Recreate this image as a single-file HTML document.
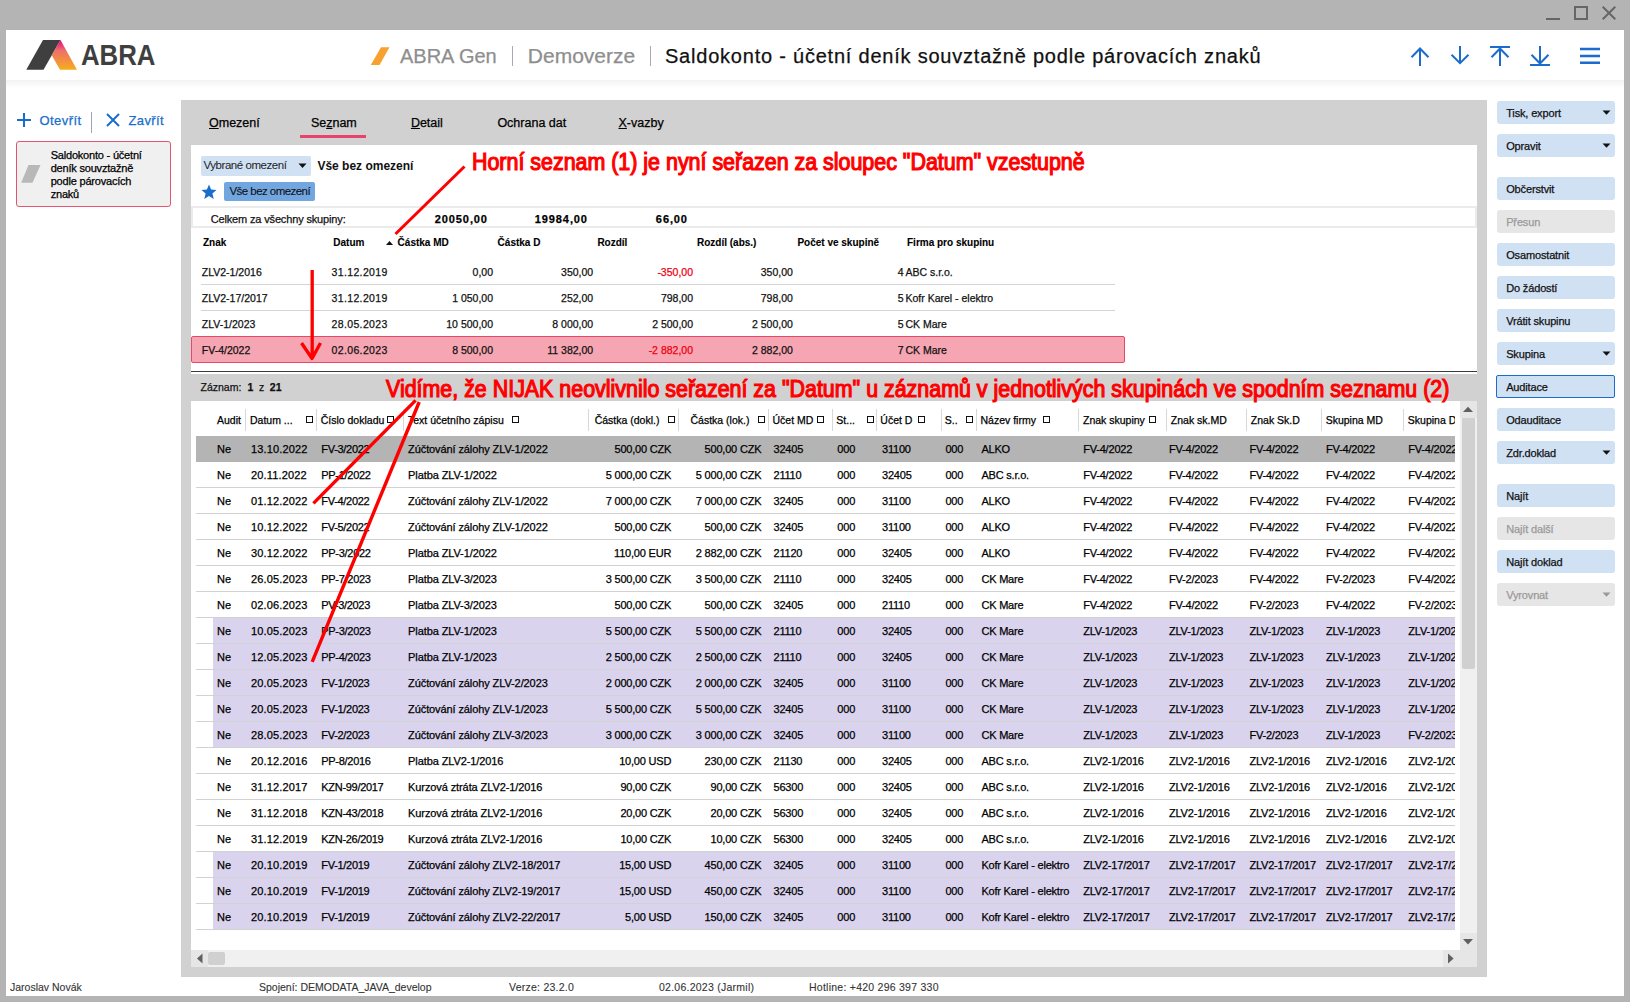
<!DOCTYPE html>
<html><head><meta charset="utf-8"><style>
html,body{margin:0;padding:0}
body{width:1630px;height:1002px;overflow:hidden;position:relative;background:#b4b4b4;font-family:"Liberation Sans", sans-serif}
.t{position:absolute;white-space:nowrap;-webkit-text-stroke:0.25px currentColor}
.r{position:absolute}
u{text-decoration:underline;text-underline-offset:1px}
</style></head><body>
<div class="r" style="left:6px;top:30px;width:1618px;height:966px;background:#fff;"></div>
<div class="r" style="left:1546px;top:18px;width:14px;height:2px;background:#666;"></div>
<div class="r" style="left:1574px;top:6px;width:10px;height:10px;border:2px solid #666"></div>
<svg class="r" style="left:1600px;top:4px" width="18" height="18"><path d="M2.7 2.7L15.3 15.3M15.3 2.7L2.7 15.3" stroke="#666" stroke-width="2"/></svg>
<div class="r" style="left:6px;top:80px;width:1618px;height:8px;background:linear-gradient(#f2f2f2,#fff)"></div>
<svg class="r" style="left:20px;top:30px" width="150" height="50">
<defs><linearGradient id="lg" x1="0" y1="0" x2="0" y2="1"><stop offset="0" stop-color="#e6007e"/><stop offset="0.35" stop-color="#ee6f6a"/><stop offset="1" stop-color="#f6ad1c"/></linearGradient></defs>
<polygon points="23,10 40.5,10 23.5,39.7 6.3,39.7" fill="#3f3f3f"/>
<polygon points="40.5,10 57,39.7 40,39.7 31.7,25.3" fill="url(#lg)"/>
</svg>
<svg class="r" style="left:80px;top:40px" width="80" height="30"><text x="1" y="25.4" font-family="Liberation Sans" font-weight="700" font-size="29" fill="#3f3f3f" textLength="74.5" lengthAdjust="spacingAndGlyphs">ABRA</text></svg>
<svg class="r" style="left:368px;top:45px" width="24" height="22"><polygon points="13,2.2 21.5,2.2 11.5,19.9 2.8,19.9" fill="#f8a12e"/></svg>
<div class="t" style="left:400.0px;top:46.17px;font-size:20px;line-height:20px;font-weight:400;color:#8e8e8e;">ABRA Gen</div>
<div class="r" style="left:512px;top:46px;width:1px;height:20px;background:#a8a8b8;"></div>
<div class="t" style="left:527.8px;top:45.32px;font-size:21px;line-height:21px;font-weight:400;color:#8e8e8e;">Demoverze</div>
<div class="r" style="left:650px;top:46px;width:1px;height:20px;background:#a8a8b8;"></div>
<div class="t" style="left:665.0px;top:45.97px;font-size:20px;line-height:20px;font-weight:400;color:#111;letter-spacing:0.78px">Saldokonto - účetní deník souvztažně podle párovacích znaků</div>
<svg class="r" style="left:1405px;top:40px" width="205" height="32" fill="none" stroke="#1a6dcc" stroke-width="2">
<path d="M15 8V26M6.5 17.3L15 8.5L23.5 17.3"/>
<path d="M55 6V23.6M46.5 14.8L55 23.2L63.5 14.8"/>
<path d="M85 7H105M95 7.5V26M86.5 17.3L95 8.5L103.5 17.3"/>
<path d="M125 25H145M135 6V24M126.5 14.8L135 23.5L143.5 14.8"/>
<path d="M175 9H195M175 16H195M175 22.7H195" stroke-width="2.4"/>
</svg>
<svg class="r" style="left:16px;top:112px" width="16" height="16"><path d="M8 1V15M1 8H15" stroke="#1a6dcc" stroke-width="2"/></svg>
<div class="t" style="left:39.6px;top:113.70px;font-size:13px;line-height:13px;font-weight:400;color:#1a6dcc;letter-spacing:0.4px">Otevřít</div>
<div class="r" style="left:91px;top:112px;width:1px;height:21px;background:#a0a0b8;"></div>
<svg class="r" style="left:106px;top:113px" width="14" height="14"><path d="M1 1L13 13M13 1L1 13" stroke="#1a6dcc" stroke-width="2"/></svg>
<div class="t" style="left:128.5px;top:113.70px;font-size:13px;line-height:13px;font-weight:400;color:#1a6dcc;letter-spacing:0.4px">Zavřít</div>
<div class="r" style="left:16px;top:141px;width:153px;height:64px;border:1px solid #e4566f;border-radius:3px;background:#f0f0f0"></div>
<svg class="r" style="left:20px;top:163px" width="22" height="22"><polygon points="8.5,2 20.5,2 12.5,19.7 1.2,19.7" fill="#b8b8b8"/></svg>
<div class="t" style="left:50.7px;top:149.69px;font-size:11px;line-height:11px;font-weight:400;color:#000;letter-spacing:-0.2px">Saldokonto - účetní</div>
<div class="t" style="left:50.7px;top:162.69px;font-size:11px;line-height:11px;font-weight:400;color:#000;letter-spacing:-0.2px">deník souvztažně</div>
<div class="t" style="left:50.7px;top:175.69px;font-size:11px;line-height:11px;font-weight:400;color:#000;letter-spacing:-0.2px">podle párovacích</div>
<div class="t" style="left:50.7px;top:188.69px;font-size:11px;line-height:11px;font-weight:400;color:#000;letter-spacing:-0.2px">znaků</div>
<div class="r" style="left:181px;top:100px;width:1306px;height:877px;background:#d1d1d1;"></div>
<div class="t" style="left:209px;top:117.42px;font-size:12.5px;line-height:12.5px;color:#000"><u>O</u>mezení</div>
<div class="t" style="left:310.9px;top:117.42px;font-size:12.5px;line-height:12.5px;color:#000">Se<u>z</u>nam</div>
<div class="t" style="left:410.9px;top:117.42px;font-size:12.5px;line-height:12.5px;color:#000"><u>D</u>etail</div>
<div class="t" style="left:497.4px;top:117.42px;font-size:12.5px;line-height:12.5px;color:#000">Ochrana dat</div>
<div class="t" style="left:618.5px;top:117.42px;font-size:12.5px;line-height:12.5px;color:#000"><u>X</u>-vazby</div>
<div class="r" style="left:300px;top:135px;width:66px;height:3px;background:#e8436a;"></div>
<div class="r" style="left:191px;top:145px;width:1286px;height:229px;background:#fff;"></div>
<div class="r" style="left:201px;top:156px;width:110px;height:20px;background:#d1e1f4;border-radius:2px"></div>
<div class="t" style="left:203.5px;top:159.97px;font-size:11.5px;line-height:11.5px;font-weight:400;color:#222;letter-spacing:-0.45px;-webkit-text-stroke:0">Vybrané omezení</div>
<svg class="r" style="left:298px;top:163px" width="10" height="6"><polygon points="0.5,0.5 8.5,0.5 4.5,5" fill="#111"/></svg>
<div class="t" style="left:317.4px;top:159.54px;font-size:12px;line-height:12px;font-weight:700;color:#111;letter-spacing:0px;-webkit-text-stroke:0">Vše bez omezení</div>
<svg class="r" style="left:201px;top:184px" width="16" height="16"><polygon points="8,0.5 10.1,5.6 15.5,6 11.4,9.5 12.7,15 8,12 3.3,15 4.6,9.5 0.5,6 5.9,5.6" fill="#1a6dcc"/></svg>
<div class="r" style="left:224px;top:182px;width:91px;height:19px;background:#72a6e0;border-radius:2px"></div>
<div class="t" style="left:229.5px;top:185.77px;font-size:11.5px;line-height:11.5px;font-weight:400;color:#111;letter-spacing:-0.55px;-webkit-text-stroke:0.1px #111">Vše bez omezení</div>
<div class="r" style="left:191px;top:206px;width:1282px;height:18px;border:2px solid #ebebeb;border-left-width:2px;background:#fff"></div>
<div class="t" style="left:210.7px;top:213.59px;font-size:11px;line-height:11px;font-weight:400;color:#111;letter-spacing:-0.15px">Celkem za všechny skupiny:</div>
<div class="t" style="left:87.9px;width:400px;text-align:right;top:213.59px;font-size:11px;line-height:11px;font-weight:700;color:#000;letter-spacing:0.9px">20050,00</div>
<div class="t" style="left:187.9px;width:400px;text-align:right;top:213.59px;font-size:11px;line-height:11px;font-weight:700;color:#000;letter-spacing:0.9px">19984,00</div>
<div class="t" style="left:287.9px;width:400px;text-align:right;top:213.59px;font-size:11px;line-height:11px;font-weight:700;color:#000;letter-spacing:0.9px">66,00</div>
<div class="t" style="left:203.0px;top:238.34px;font-size:10px;line-height:10px;font-weight:700;color:#000;-webkit-text-stroke:0.1px #000">Znak</div>
<div class="t" style="left:333.3px;top:238.34px;font-size:10px;line-height:10px;font-weight:700;color:#000;-webkit-text-stroke:0.1px #000">Datum</div>
<div class="t" style="left:397.6px;top:238.34px;font-size:10px;line-height:10px;font-weight:700;color:#000;-webkit-text-stroke:0.1px #000">Částka MD</div>
<div class="t" style="left:497.6px;top:238.34px;font-size:10px;line-height:10px;font-weight:700;color:#000;-webkit-text-stroke:0.1px #000">Částka D</div>
<div class="t" style="left:597.4px;top:238.34px;font-size:10px;line-height:10px;font-weight:700;color:#000;-webkit-text-stroke:0.1px #000">Rozdíl</div>
<div class="t" style="left:697.0px;top:238.34px;font-size:10px;line-height:10px;font-weight:700;color:#000;-webkit-text-stroke:0.1px #000">Rozdíl (abs.)</div>
<div class="t" style="left:797.4px;top:238.34px;font-size:10px;line-height:10px;font-weight:700;color:#000;-webkit-text-stroke:0.1px #000">Počet ve skupině</div>
<div class="t" style="left:907.0px;top:238.34px;font-size:10px;line-height:10px;font-weight:700;color:#000;-webkit-text-stroke:0.1px #000">Firma pro skupinu</div>
<svg class="r" style="left:385px;top:239.5px" width="9" height="6"><polygon points="1,5 4.5,1 8,5" fill="#111"/></svg>
<div class="r" style="left:201px;top:284px;width:914px;height:1px;background:#d4d4d4;"></div>
<div class="t" style="left:201.8px;top:266.61px;font-size:10.5px;line-height:10.5px;font-weight:400;color:#111;">ZLV2-1/2016</div>
<div class="t" style="left:331.6px;top:266.61px;font-size:10.5px;line-height:10.5px;font-weight:400;color:#111;letter-spacing:0.35px">31.12.2019</div>
<div class="t" style="left:93.0px;width:400px;text-align:right;top:266.61px;font-size:10.5px;line-height:10.5px;font-weight:400;color:#111;">0,00</div>
<div class="t" style="left:193.2px;width:400px;text-align:right;top:266.61px;font-size:10.5px;line-height:10.5px;font-weight:400;color:#111;">350,00</div>
<div class="t" style="left:293.0px;width:400px;text-align:right;top:266.61px;font-size:10.5px;line-height:10.5px;font-weight:400;color:#f00010;">-350,00</div>
<div class="t" style="left:392.9px;width:400px;text-align:right;top:266.61px;font-size:10.5px;line-height:10.5px;font-weight:400;color:#111;">350,00</div>
<div class="t" style="left:503.5px;width:400px;text-align:right;top:266.61px;font-size:10.5px;line-height:10.5px;font-weight:400;color:#111;">4</div>
<div class="t" style="left:905.5px;top:266.61px;font-size:10.5px;line-height:10.5px;font-weight:400;color:#111;">ABC s.r.o.</div>
<div class="r" style="left:201px;top:310px;width:914px;height:1px;background:#d4d4d4;"></div>
<div class="t" style="left:201.8px;top:292.61px;font-size:10.5px;line-height:10.5px;font-weight:400;color:#111;">ZLV2-17/2017</div>
<div class="t" style="left:331.6px;top:292.61px;font-size:10.5px;line-height:10.5px;font-weight:400;color:#111;letter-spacing:0.35px">31.12.2019</div>
<div class="t" style="left:93.0px;width:400px;text-align:right;top:292.61px;font-size:10.5px;line-height:10.5px;font-weight:400;color:#111;">1 050,00</div>
<div class="t" style="left:193.2px;width:400px;text-align:right;top:292.61px;font-size:10.5px;line-height:10.5px;font-weight:400;color:#111;">252,00</div>
<div class="t" style="left:293.0px;width:400px;text-align:right;top:292.61px;font-size:10.5px;line-height:10.5px;font-weight:400;color:#111;">798,00</div>
<div class="t" style="left:392.9px;width:400px;text-align:right;top:292.61px;font-size:10.5px;line-height:10.5px;font-weight:400;color:#111;">798,00</div>
<div class="t" style="left:503.5px;width:400px;text-align:right;top:292.61px;font-size:10.5px;line-height:10.5px;font-weight:400;color:#111;">5</div>
<div class="t" style="left:905.5px;top:292.61px;font-size:10.5px;line-height:10.5px;font-weight:400;color:#111;">Kofr Karel - elektro</div>
<div class="t" style="left:201.8px;top:318.61px;font-size:10.5px;line-height:10.5px;font-weight:400;color:#111;">ZLV-1/2023</div>
<div class="t" style="left:331.6px;top:318.61px;font-size:10.5px;line-height:10.5px;font-weight:400;color:#111;letter-spacing:0.35px">28.05.2023</div>
<div class="t" style="left:93.0px;width:400px;text-align:right;top:318.61px;font-size:10.5px;line-height:10.5px;font-weight:400;color:#111;">10 500,00</div>
<div class="t" style="left:193.2px;width:400px;text-align:right;top:318.61px;font-size:10.5px;line-height:10.5px;font-weight:400;color:#111;">8 000,00</div>
<div class="t" style="left:293.0px;width:400px;text-align:right;top:318.61px;font-size:10.5px;line-height:10.5px;font-weight:400;color:#111;">2 500,00</div>
<div class="t" style="left:392.9px;width:400px;text-align:right;top:318.61px;font-size:10.5px;line-height:10.5px;font-weight:400;color:#111;">2 500,00</div>
<div class="t" style="left:503.5px;width:400px;text-align:right;top:318.61px;font-size:10.5px;line-height:10.5px;font-weight:400;color:#111;">5</div>
<div class="t" style="left:905.5px;top:318.61px;font-size:10.5px;line-height:10.5px;font-weight:400;color:#111;">CK Mare</div>
<div class="r" style="left:191px;top:336px;width:932px;height:25px;border:1px solid #e84868;border-radius:2px;background:#f6a5b2"></div>
<div class="t" style="left:201.8px;top:344.61px;font-size:10.5px;line-height:10.5px;font-weight:400;color:#111;">FV-4/2022</div>
<div class="t" style="left:331.6px;top:344.61px;font-size:10.5px;line-height:10.5px;font-weight:400;color:#111;letter-spacing:0.35px">02.06.2023</div>
<div class="t" style="left:93.0px;width:400px;text-align:right;top:344.61px;font-size:10.5px;line-height:10.5px;font-weight:400;color:#111;">8 500,00</div>
<div class="t" style="left:193.2px;width:400px;text-align:right;top:344.61px;font-size:10.5px;line-height:10.5px;font-weight:400;color:#111;">11 382,00</div>
<div class="t" style="left:293.0px;width:400px;text-align:right;top:344.61px;font-size:10.5px;line-height:10.5px;font-weight:400;color:#f00010;">-2 882,00</div>
<div class="t" style="left:392.9px;width:400px;text-align:right;top:344.61px;font-size:10.5px;line-height:10.5px;font-weight:400;color:#111;">2 882,00</div>
<div class="t" style="left:503.5px;width:400px;text-align:right;top:344.61px;font-size:10.5px;line-height:10.5px;font-weight:400;color:#111;">7</div>
<div class="t" style="left:905.5px;top:344.61px;font-size:10.5px;line-height:10.5px;font-weight:400;color:#111;">CK Mare</div>
<div class="r" style="left:191px;top:371px;width:1286px;height:1px;background:#3a3a3a;"></div>
<div class="t" style="left:200.5px;top:382.31px;font-size:10.5px;line-height:10.5px;font-weight:400;color:#111;">Záznam:</div>
<div class="t" style="left:247.5px;top:382.31px;font-size:10.5px;line-height:10.5px;font-weight:700;color:#111;">1</div>
<div class="t" style="left:259.0px;top:382.31px;font-size:10.5px;line-height:10.5px;font-weight:400;color:#111;">z</div>
<div class="t" style="left:269.8px;top:382.31px;font-size:10.5px;line-height:10.5px;font-weight:700;color:#111;">21</div>
<div class="r" style="left:191px;top:401px;width:1286px;height:566px;background:#fff;"></div>
<div class="r" style="left:245px;top:409px;width:1px;height:22px;background:#d8d8d8;"></div>
<div class="r" style="left:191px;top:401px;width:1264px;height:35px;overflow:hidden">
<div class="t" style="left:26.0px;top:14.11px;font-size:10.5px;line-height:10.5px;font-weight:400;color:#000;letter-spacing:0px">Audit</div>
<div class="t" style="left:59.0px;top:14.11px;font-size:10.5px;line-height:10.5px;font-weight:400;color:#000;letter-spacing:0px">Datum ...</div>
<div class="r" style="left:115px;top:15px;width:5px;height:5px;border:1px solid #111"></div>
<div class="r" style="left:125px;top:8px;width:1px;height:22px;background:#d8d8d8"></div>
<div class="t" style="left:129.7px;top:14.11px;font-size:10.5px;line-height:10.5px;font-weight:400;color:#000;letter-spacing:0px">Číslo dokladu</div>
<div class="r" style="left:196px;top:15px;width:5px;height:5px;border:1px solid #111"></div>
<div class="r" style="left:212px;top:8px;width:1px;height:22px;background:#d8d8d8"></div>
<div class="t" style="left:217.0px;top:14.11px;font-size:10.5px;line-height:10.5px;font-weight:400;color:#000;letter-spacing:0px">Text účetního zápisu</div>
<div class="r" style="left:321px;top:15px;width:5px;height:5px;border:1px solid #111"></div>
<div class="r" style="left:397px;top:8px;width:1px;height:22px;background:#d8d8d8"></div>
<div class="t" style="left:403.7px;top:14.11px;font-size:10.5px;line-height:10.5px;font-weight:400;color:#000;letter-spacing:0px">Částka (dokl.)</div>
<div class="r" style="left:477px;top:15px;width:5px;height:5px;border:1px solid #111"></div>
<div class="r" style="left:487px;top:8px;width:1px;height:22px;background:#d8d8d8"></div>
<div class="t" style="left:499.5px;top:14.11px;font-size:10.5px;line-height:10.5px;font-weight:400;color:#000;letter-spacing:0px">Částka (lok.)</div>
<div class="r" style="left:567px;top:15px;width:5px;height:5px;border:1px solid #111"></div>
<div class="r" style="left:577px;top:8px;width:1px;height:22px;background:#d8d8d8"></div>
<div class="t" style="left:581.5px;top:14.11px;font-size:10.5px;line-height:10.5px;font-weight:400;color:#000;letter-spacing:0px">Účet MD</div>
<div class="r" style="left:626px;top:15px;width:5px;height:5px;border:1px solid #111"></div>
<div class="r" style="left:641px;top:8px;width:1px;height:22px;background:#d8d8d8"></div>
<div class="t" style="left:645.3px;top:14.11px;font-size:10.5px;line-height:10.5px;font-weight:400;color:#000;letter-spacing:0px">St...</div>
<div class="r" style="left:676px;top:15px;width:5px;height:5px;border:1px solid #111"></div>
<div class="r" style="left:685px;top:8px;width:1px;height:22px;background:#d8d8d8"></div>
<div class="t" style="left:689.3px;top:14.11px;font-size:10.5px;line-height:10.5px;font-weight:400;color:#000;letter-spacing:0px">Účet D</div>
<div class="r" style="left:727px;top:15px;width:5px;height:5px;border:1px solid #111"></div>
<div class="r" style="left:750px;top:8px;width:1px;height:22px;background:#d8d8d8"></div>
<div class="t" style="left:753.8px;top:14.11px;font-size:10.5px;line-height:10.5px;font-weight:400;color:#000;letter-spacing:0px">S..</div>
<div class="r" style="left:775px;top:15px;width:5px;height:5px;border:1px solid #111"></div>
<div class="r" style="left:785px;top:8px;width:1px;height:22px;background:#d8d8d8"></div>
<div class="t" style="left:789.5px;top:14.11px;font-size:10.5px;line-height:10.5px;font-weight:400;color:#000;letter-spacing:0px">Název firmy</div>
<div class="r" style="left:852px;top:15px;width:5px;height:5px;border:1px solid #111"></div>
<div class="r" style="left:887px;top:8px;width:1px;height:22px;background:#d8d8d8"></div>
<div class="t" style="left:892.0px;top:14.11px;font-size:10.5px;line-height:10.5px;font-weight:400;color:#000;letter-spacing:0px">Znak skupiny</div>
<div class="r" style="left:958px;top:15px;width:5px;height:5px;border:1px solid #111"></div>
<div class="r" style="left:975px;top:8px;width:1px;height:22px;background:#d8d8d8"></div>
<div class="t" style="left:979.8px;top:14.11px;font-size:10.5px;line-height:10.5px;font-weight:400;color:#000;letter-spacing:0px">Znak sk.MD</div>
<div class="r" style="left:1055px;top:8px;width:1px;height:22px;background:#d8d8d8"></div>
<div class="t" style="left:1059.8px;top:14.11px;font-size:10.5px;line-height:10.5px;font-weight:400;color:#000;letter-spacing:0px">Znak Sk.D</div>
<div class="r" style="left:1130px;top:8px;width:1px;height:22px;background:#d8d8d8"></div>
<div class="t" style="left:1134.7px;top:14.11px;font-size:10.5px;line-height:10.5px;font-weight:400;color:#000;letter-spacing:0px">Skupina MD</div>
<div class="r" style="left:1212px;top:8px;width:1px;height:22px;background:#d8d8d8"></div>
<div class="t" style="left:1216.8px;top:14.11px;font-size:10.5px;line-height:10.5px;font-weight:400;color:#000;letter-spacing:0px">Skupina D</div>
</div>
<div class="r" style="left:191px;top:436px;width:1264px;height:494px;overflow:hidden">
<div class="r" style="left:5px;top:0px;width:1264px;height:26px;background:#b4b4b4;"></div>
<div class="t" style="left:26.0px;top:7.69px;font-size:11px;line-height:11px;font-weight:400;color:#000;">Ne</div>
<div class="t" style="left:60.0px;top:7.69px;font-size:11px;line-height:11px;font-weight:400;color:#000;letter-spacing:0.15px">13.10.2022</div>
<div class="t" style="left:130.3px;top:7.69px;font-size:11px;line-height:11px;font-weight:400;color:#000;letter-spacing:-0.3px">FV-3/2022</div>
<div class="t" style="left:217.1px;top:7.69px;font-size:11px;line-height:11px;font-weight:400;color:#000;letter-spacing:-0.1px">Zúčtování zálohy ZLV-1/2022</div>
<div class="t" style="left:80.2px;width:400px;text-align:right;top:7.69px;font-size:11px;line-height:11px;font-weight:400;color:#000;letter-spacing:-0.2px">500,00 CZK</div>
<div class="t" style="left:170.3px;width:400px;text-align:right;top:7.69px;font-size:11px;line-height:11px;font-weight:400;color:#000;letter-spacing:-0.2px">500,00 CZK</div>
<div class="t" style="left:582.5px;top:7.69px;font-size:11px;line-height:11px;font-weight:400;color:#000;letter-spacing:-0.2px">32405</div>
<div class="t" style="left:646.3px;top:7.69px;font-size:11px;line-height:11px;font-weight:400;color:#000;letter-spacing:-0.2px">000</div>
<div class="t" style="left:691.0px;top:7.69px;font-size:11px;line-height:11px;font-weight:400;color:#000;letter-spacing:-0.2px">31100</div>
<div class="t" style="left:754.4px;top:7.69px;font-size:11px;line-height:11px;font-weight:400;color:#000;letter-spacing:-0.2px">000</div>
<div class="t" style="left:790.4px;top:7.69px;font-size:11px;line-height:11px;font-weight:400;color:#000;letter-spacing:-0.2px">ALKO</div>
<div class="t" style="left:892.2px;top:7.69px;font-size:11px;line-height:11px;font-weight:400;color:#000;letter-spacing:-0.2px">FV-4/2022</div>
<div class="t" style="left:978.0px;top:7.69px;font-size:11px;line-height:11px;font-weight:400;color:#000;letter-spacing:-0.2px">FV-4/2022</div>
<div class="t" style="left:1058.4px;top:7.69px;font-size:11px;line-height:11px;font-weight:400;color:#000;letter-spacing:-0.2px">FV-4/2022</div>
<div class="t" style="left:1135.0px;top:7.69px;font-size:11px;line-height:11px;font-weight:400;color:#000;letter-spacing:-0.2px">FV-4/2022</div>
<div class="t" style="left:1217.3px;top:7.69px;font-size:11px;line-height:11px;font-weight:400;color:#000;letter-spacing:-0.2px">FV-4/2022</div>
<div class="r" style="left:5px;top:51px;width:1264px;height:1px;background:#d2d2d2;"></div>
<div class="t" style="left:26.0px;top:33.69px;font-size:11px;line-height:11px;font-weight:400;color:#000;">Ne</div>
<div class="t" style="left:60.0px;top:33.69px;font-size:11px;line-height:11px;font-weight:400;color:#000;letter-spacing:0.15px">20.11.2022</div>
<div class="t" style="left:130.3px;top:33.69px;font-size:11px;line-height:11px;font-weight:400;color:#000;letter-spacing:-0.3px">PP-1/2022</div>
<div class="t" style="left:217.1px;top:33.69px;font-size:11px;line-height:11px;font-weight:400;color:#000;letter-spacing:-0.1px">Platba ZLV-1/2022</div>
<div class="t" style="left:80.2px;width:400px;text-align:right;top:33.69px;font-size:11px;line-height:11px;font-weight:400;color:#000;letter-spacing:-0.2px">5 000,00 CZK</div>
<div class="t" style="left:170.3px;width:400px;text-align:right;top:33.69px;font-size:11px;line-height:11px;font-weight:400;color:#000;letter-spacing:-0.2px">5 000,00 CZK</div>
<div class="t" style="left:582.5px;top:33.69px;font-size:11px;line-height:11px;font-weight:400;color:#000;letter-spacing:-0.2px">21110</div>
<div class="t" style="left:646.3px;top:33.69px;font-size:11px;line-height:11px;font-weight:400;color:#000;letter-spacing:-0.2px">000</div>
<div class="t" style="left:691.0px;top:33.69px;font-size:11px;line-height:11px;font-weight:400;color:#000;letter-spacing:-0.2px">32405</div>
<div class="t" style="left:754.4px;top:33.69px;font-size:11px;line-height:11px;font-weight:400;color:#000;letter-spacing:-0.2px">000</div>
<div class="t" style="left:790.4px;top:33.69px;font-size:11px;line-height:11px;font-weight:400;color:#000;letter-spacing:-0.2px">ABC s.r.o.</div>
<div class="t" style="left:892.2px;top:33.69px;font-size:11px;line-height:11px;font-weight:400;color:#000;letter-spacing:-0.2px">FV-4/2022</div>
<div class="t" style="left:978.0px;top:33.69px;font-size:11px;line-height:11px;font-weight:400;color:#000;letter-spacing:-0.2px">FV-4/2022</div>
<div class="t" style="left:1058.4px;top:33.69px;font-size:11px;line-height:11px;font-weight:400;color:#000;letter-spacing:-0.2px">FV-4/2022</div>
<div class="t" style="left:1135.0px;top:33.69px;font-size:11px;line-height:11px;font-weight:400;color:#000;letter-spacing:-0.2px">FV-4/2022</div>
<div class="t" style="left:1217.3px;top:33.69px;font-size:11px;line-height:11px;font-weight:400;color:#000;letter-spacing:-0.2px">FV-4/2022</div>
<div class="r" style="left:5px;top:77px;width:1264px;height:1px;background:#d2d2d2;"></div>
<div class="t" style="left:26.0px;top:59.69px;font-size:11px;line-height:11px;font-weight:400;color:#000;">Ne</div>
<div class="t" style="left:60.0px;top:59.69px;font-size:11px;line-height:11px;font-weight:400;color:#000;letter-spacing:0.15px">01.12.2022</div>
<div class="t" style="left:130.3px;top:59.69px;font-size:11px;line-height:11px;font-weight:400;color:#000;letter-spacing:-0.3px">FV-4/2022</div>
<div class="t" style="left:217.1px;top:59.69px;font-size:11px;line-height:11px;font-weight:400;color:#000;letter-spacing:-0.1px">Zúčtování zálohy ZLV-1/2022</div>
<div class="t" style="left:80.2px;width:400px;text-align:right;top:59.69px;font-size:11px;line-height:11px;font-weight:400;color:#000;letter-spacing:-0.2px">7 000,00 CZK</div>
<div class="t" style="left:170.3px;width:400px;text-align:right;top:59.69px;font-size:11px;line-height:11px;font-weight:400;color:#000;letter-spacing:-0.2px">7 000,00 CZK</div>
<div class="t" style="left:582.5px;top:59.69px;font-size:11px;line-height:11px;font-weight:400;color:#000;letter-spacing:-0.2px">32405</div>
<div class="t" style="left:646.3px;top:59.69px;font-size:11px;line-height:11px;font-weight:400;color:#000;letter-spacing:-0.2px">000</div>
<div class="t" style="left:691.0px;top:59.69px;font-size:11px;line-height:11px;font-weight:400;color:#000;letter-spacing:-0.2px">31100</div>
<div class="t" style="left:754.4px;top:59.69px;font-size:11px;line-height:11px;font-weight:400;color:#000;letter-spacing:-0.2px">000</div>
<div class="t" style="left:790.4px;top:59.69px;font-size:11px;line-height:11px;font-weight:400;color:#000;letter-spacing:-0.2px">ALKO</div>
<div class="t" style="left:892.2px;top:59.69px;font-size:11px;line-height:11px;font-weight:400;color:#000;letter-spacing:-0.2px">FV-4/2022</div>
<div class="t" style="left:978.0px;top:59.69px;font-size:11px;line-height:11px;font-weight:400;color:#000;letter-spacing:-0.2px">FV-4/2022</div>
<div class="t" style="left:1058.4px;top:59.69px;font-size:11px;line-height:11px;font-weight:400;color:#000;letter-spacing:-0.2px">FV-4/2022</div>
<div class="t" style="left:1135.0px;top:59.69px;font-size:11px;line-height:11px;font-weight:400;color:#000;letter-spacing:-0.2px">FV-4/2022</div>
<div class="t" style="left:1217.3px;top:59.69px;font-size:11px;line-height:11px;font-weight:400;color:#000;letter-spacing:-0.2px">FV-4/2022</div>
<div class="r" style="left:5px;top:103px;width:1264px;height:1px;background:#d2d2d2;"></div>
<div class="t" style="left:26.0px;top:85.69px;font-size:11px;line-height:11px;font-weight:400;color:#000;">Ne</div>
<div class="t" style="left:60.0px;top:85.69px;font-size:11px;line-height:11px;font-weight:400;color:#000;letter-spacing:0.15px">10.12.2022</div>
<div class="t" style="left:130.3px;top:85.69px;font-size:11px;line-height:11px;font-weight:400;color:#000;letter-spacing:-0.3px">FV-5/2022</div>
<div class="t" style="left:217.1px;top:85.69px;font-size:11px;line-height:11px;font-weight:400;color:#000;letter-spacing:-0.1px">Zúčtování zálohy ZLV-1/2022</div>
<div class="t" style="left:80.2px;width:400px;text-align:right;top:85.69px;font-size:11px;line-height:11px;font-weight:400;color:#000;letter-spacing:-0.2px">500,00 CZK</div>
<div class="t" style="left:170.3px;width:400px;text-align:right;top:85.69px;font-size:11px;line-height:11px;font-weight:400;color:#000;letter-spacing:-0.2px">500,00 CZK</div>
<div class="t" style="left:582.5px;top:85.69px;font-size:11px;line-height:11px;font-weight:400;color:#000;letter-spacing:-0.2px">32405</div>
<div class="t" style="left:646.3px;top:85.69px;font-size:11px;line-height:11px;font-weight:400;color:#000;letter-spacing:-0.2px">000</div>
<div class="t" style="left:691.0px;top:85.69px;font-size:11px;line-height:11px;font-weight:400;color:#000;letter-spacing:-0.2px">31100</div>
<div class="t" style="left:754.4px;top:85.69px;font-size:11px;line-height:11px;font-weight:400;color:#000;letter-spacing:-0.2px">000</div>
<div class="t" style="left:790.4px;top:85.69px;font-size:11px;line-height:11px;font-weight:400;color:#000;letter-spacing:-0.2px">ALKO</div>
<div class="t" style="left:892.2px;top:85.69px;font-size:11px;line-height:11px;font-weight:400;color:#000;letter-spacing:-0.2px">FV-4/2022</div>
<div class="t" style="left:978.0px;top:85.69px;font-size:11px;line-height:11px;font-weight:400;color:#000;letter-spacing:-0.2px">FV-4/2022</div>
<div class="t" style="left:1058.4px;top:85.69px;font-size:11px;line-height:11px;font-weight:400;color:#000;letter-spacing:-0.2px">FV-4/2022</div>
<div class="t" style="left:1135.0px;top:85.69px;font-size:11px;line-height:11px;font-weight:400;color:#000;letter-spacing:-0.2px">FV-4/2022</div>
<div class="t" style="left:1217.3px;top:85.69px;font-size:11px;line-height:11px;font-weight:400;color:#000;letter-spacing:-0.2px">FV-4/2022</div>
<div class="r" style="left:5px;top:129px;width:1264px;height:1px;background:#d2d2d2;"></div>
<div class="t" style="left:26.0px;top:111.69px;font-size:11px;line-height:11px;font-weight:400;color:#000;">Ne</div>
<div class="t" style="left:60.0px;top:111.69px;font-size:11px;line-height:11px;font-weight:400;color:#000;letter-spacing:0.15px">30.12.2022</div>
<div class="t" style="left:130.3px;top:111.69px;font-size:11px;line-height:11px;font-weight:400;color:#000;letter-spacing:-0.3px">PP-3/2022</div>
<div class="t" style="left:217.1px;top:111.69px;font-size:11px;line-height:11px;font-weight:400;color:#000;letter-spacing:-0.1px">Platba ZLV-1/2022</div>
<div class="t" style="left:80.2px;width:400px;text-align:right;top:111.69px;font-size:11px;line-height:11px;font-weight:400;color:#000;letter-spacing:-0.2px">110,00 EUR</div>
<div class="t" style="left:170.3px;width:400px;text-align:right;top:111.69px;font-size:11px;line-height:11px;font-weight:400;color:#000;letter-spacing:-0.2px">2 882,00 CZK</div>
<div class="t" style="left:582.5px;top:111.69px;font-size:11px;line-height:11px;font-weight:400;color:#000;letter-spacing:-0.2px">21120</div>
<div class="t" style="left:646.3px;top:111.69px;font-size:11px;line-height:11px;font-weight:400;color:#000;letter-spacing:-0.2px">000</div>
<div class="t" style="left:691.0px;top:111.69px;font-size:11px;line-height:11px;font-weight:400;color:#000;letter-spacing:-0.2px">32405</div>
<div class="t" style="left:754.4px;top:111.69px;font-size:11px;line-height:11px;font-weight:400;color:#000;letter-spacing:-0.2px">000</div>
<div class="t" style="left:790.4px;top:111.69px;font-size:11px;line-height:11px;font-weight:400;color:#000;letter-spacing:-0.2px">ALKO</div>
<div class="t" style="left:892.2px;top:111.69px;font-size:11px;line-height:11px;font-weight:400;color:#000;letter-spacing:-0.2px">FV-4/2022</div>
<div class="t" style="left:978.0px;top:111.69px;font-size:11px;line-height:11px;font-weight:400;color:#000;letter-spacing:-0.2px">FV-4/2022</div>
<div class="t" style="left:1058.4px;top:111.69px;font-size:11px;line-height:11px;font-weight:400;color:#000;letter-spacing:-0.2px">FV-4/2022</div>
<div class="t" style="left:1135.0px;top:111.69px;font-size:11px;line-height:11px;font-weight:400;color:#000;letter-spacing:-0.2px">FV-4/2022</div>
<div class="t" style="left:1217.3px;top:111.69px;font-size:11px;line-height:11px;font-weight:400;color:#000;letter-spacing:-0.2px">FV-4/2022</div>
<div class="r" style="left:5px;top:155px;width:1264px;height:1px;background:#d2d2d2;"></div>
<div class="t" style="left:26.0px;top:137.69px;font-size:11px;line-height:11px;font-weight:400;color:#000;">Ne</div>
<div class="t" style="left:60.0px;top:137.69px;font-size:11px;line-height:11px;font-weight:400;color:#000;letter-spacing:0.15px">26.05.2023</div>
<div class="t" style="left:130.3px;top:137.69px;font-size:11px;line-height:11px;font-weight:400;color:#000;letter-spacing:-0.3px">PP-7/2023</div>
<div class="t" style="left:217.1px;top:137.69px;font-size:11px;line-height:11px;font-weight:400;color:#000;letter-spacing:-0.1px">Platba ZLV-3/2023</div>
<div class="t" style="left:80.2px;width:400px;text-align:right;top:137.69px;font-size:11px;line-height:11px;font-weight:400;color:#000;letter-spacing:-0.2px">3 500,00 CZK</div>
<div class="t" style="left:170.3px;width:400px;text-align:right;top:137.69px;font-size:11px;line-height:11px;font-weight:400;color:#000;letter-spacing:-0.2px">3 500,00 CZK</div>
<div class="t" style="left:582.5px;top:137.69px;font-size:11px;line-height:11px;font-weight:400;color:#000;letter-spacing:-0.2px">21110</div>
<div class="t" style="left:646.3px;top:137.69px;font-size:11px;line-height:11px;font-weight:400;color:#000;letter-spacing:-0.2px">000</div>
<div class="t" style="left:691.0px;top:137.69px;font-size:11px;line-height:11px;font-weight:400;color:#000;letter-spacing:-0.2px">32405</div>
<div class="t" style="left:754.4px;top:137.69px;font-size:11px;line-height:11px;font-weight:400;color:#000;letter-spacing:-0.2px">000</div>
<div class="t" style="left:790.4px;top:137.69px;font-size:11px;line-height:11px;font-weight:400;color:#000;letter-spacing:-0.2px">CK Mare</div>
<div class="t" style="left:892.2px;top:137.69px;font-size:11px;line-height:11px;font-weight:400;color:#000;letter-spacing:-0.2px">FV-4/2022</div>
<div class="t" style="left:978.0px;top:137.69px;font-size:11px;line-height:11px;font-weight:400;color:#000;letter-spacing:-0.2px">FV-2/2023</div>
<div class="t" style="left:1058.4px;top:137.69px;font-size:11px;line-height:11px;font-weight:400;color:#000;letter-spacing:-0.2px">FV-4/2022</div>
<div class="t" style="left:1135.0px;top:137.69px;font-size:11px;line-height:11px;font-weight:400;color:#000;letter-spacing:-0.2px">FV-2/2023</div>
<div class="t" style="left:1217.3px;top:137.69px;font-size:11px;line-height:11px;font-weight:400;color:#000;letter-spacing:-0.2px">FV-4/2022</div>
<div class="r" style="left:5px;top:181px;width:1264px;height:1px;background:#d2d2d2;"></div>
<div class="t" style="left:26.0px;top:163.69px;font-size:11px;line-height:11px;font-weight:400;color:#000;">Ne</div>
<div class="t" style="left:60.0px;top:163.69px;font-size:11px;line-height:11px;font-weight:400;color:#000;letter-spacing:0.15px">02.06.2023</div>
<div class="t" style="left:130.3px;top:163.69px;font-size:11px;line-height:11px;font-weight:400;color:#000;letter-spacing:-0.3px">PV-3/2023</div>
<div class="t" style="left:217.1px;top:163.69px;font-size:11px;line-height:11px;font-weight:400;color:#000;letter-spacing:-0.1px">Platba ZLV-3/2023</div>
<div class="t" style="left:80.2px;width:400px;text-align:right;top:163.69px;font-size:11px;line-height:11px;font-weight:400;color:#000;letter-spacing:-0.2px">500,00 CZK</div>
<div class="t" style="left:170.3px;width:400px;text-align:right;top:163.69px;font-size:11px;line-height:11px;font-weight:400;color:#000;letter-spacing:-0.2px">500,00 CZK</div>
<div class="t" style="left:582.5px;top:163.69px;font-size:11px;line-height:11px;font-weight:400;color:#000;letter-spacing:-0.2px">32405</div>
<div class="t" style="left:646.3px;top:163.69px;font-size:11px;line-height:11px;font-weight:400;color:#000;letter-spacing:-0.2px">000</div>
<div class="t" style="left:691.0px;top:163.69px;font-size:11px;line-height:11px;font-weight:400;color:#000;letter-spacing:-0.2px">21110</div>
<div class="t" style="left:754.4px;top:163.69px;font-size:11px;line-height:11px;font-weight:400;color:#000;letter-spacing:-0.2px">000</div>
<div class="t" style="left:790.4px;top:163.69px;font-size:11px;line-height:11px;font-weight:400;color:#000;letter-spacing:-0.2px">CK Mare</div>
<div class="t" style="left:892.2px;top:163.69px;font-size:11px;line-height:11px;font-weight:400;color:#000;letter-spacing:-0.2px">FV-4/2022</div>
<div class="t" style="left:978.0px;top:163.69px;font-size:11px;line-height:11px;font-weight:400;color:#000;letter-spacing:-0.2px">FV-4/2022</div>
<div class="t" style="left:1058.4px;top:163.69px;font-size:11px;line-height:11px;font-weight:400;color:#000;letter-spacing:-0.2px">FV-2/2023</div>
<div class="t" style="left:1135.0px;top:163.69px;font-size:11px;line-height:11px;font-weight:400;color:#000;letter-spacing:-0.2px">FV-4/2022</div>
<div class="t" style="left:1217.3px;top:163.69px;font-size:11px;line-height:11px;font-weight:400;color:#000;letter-spacing:-0.2px">FV-2/2023</div>
<div class="r" style="left:22px;top:182px;width:1264px;height:25px;background:#d9d3ed;"></div>
<div class="r" style="left:5px;top:207px;width:1264px;height:1px;background:#d2d2d2;"></div>
<div class="t" style="left:26.0px;top:189.69px;font-size:11px;line-height:11px;font-weight:400;color:#000;">Ne</div>
<div class="t" style="left:60.0px;top:189.69px;font-size:11px;line-height:11px;font-weight:400;color:#000;letter-spacing:0.15px">10.05.2023</div>
<div class="t" style="left:130.3px;top:189.69px;font-size:11px;line-height:11px;font-weight:400;color:#000;letter-spacing:-0.3px">PP-3/2023</div>
<div class="t" style="left:217.1px;top:189.69px;font-size:11px;line-height:11px;font-weight:400;color:#000;letter-spacing:-0.1px">Platba ZLV-1/2023</div>
<div class="t" style="left:80.2px;width:400px;text-align:right;top:189.69px;font-size:11px;line-height:11px;font-weight:400;color:#000;letter-spacing:-0.2px">5 500,00 CZK</div>
<div class="t" style="left:170.3px;width:400px;text-align:right;top:189.69px;font-size:11px;line-height:11px;font-weight:400;color:#000;letter-spacing:-0.2px">5 500,00 CZK</div>
<div class="t" style="left:582.5px;top:189.69px;font-size:11px;line-height:11px;font-weight:400;color:#000;letter-spacing:-0.2px">21110</div>
<div class="t" style="left:646.3px;top:189.69px;font-size:11px;line-height:11px;font-weight:400;color:#000;letter-spacing:-0.2px">000</div>
<div class="t" style="left:691.0px;top:189.69px;font-size:11px;line-height:11px;font-weight:400;color:#000;letter-spacing:-0.2px">32405</div>
<div class="t" style="left:754.4px;top:189.69px;font-size:11px;line-height:11px;font-weight:400;color:#000;letter-spacing:-0.2px">000</div>
<div class="t" style="left:790.4px;top:189.69px;font-size:11px;line-height:11px;font-weight:400;color:#000;letter-spacing:-0.2px">CK Mare</div>
<div class="t" style="left:892.2px;top:189.69px;font-size:11px;line-height:11px;font-weight:400;color:#000;letter-spacing:-0.2px">ZLV-1/2023</div>
<div class="t" style="left:978.0px;top:189.69px;font-size:11px;line-height:11px;font-weight:400;color:#000;letter-spacing:-0.2px">ZLV-1/2023</div>
<div class="t" style="left:1058.4px;top:189.69px;font-size:11px;line-height:11px;font-weight:400;color:#000;letter-spacing:-0.2px">ZLV-1/2023</div>
<div class="t" style="left:1135.0px;top:189.69px;font-size:11px;line-height:11px;font-weight:400;color:#000;letter-spacing:-0.2px">ZLV-1/2023</div>
<div class="t" style="left:1217.3px;top:189.69px;font-size:11px;line-height:11px;font-weight:400;color:#000;letter-spacing:-0.2px">ZLV-1/2023</div>
<div class="r" style="left:22px;top:208px;width:1264px;height:25px;background:#d9d3ed;"></div>
<div class="r" style="left:5px;top:233px;width:1264px;height:1px;background:#d2d2d2;"></div>
<div class="t" style="left:26.0px;top:215.69px;font-size:11px;line-height:11px;font-weight:400;color:#000;">Ne</div>
<div class="t" style="left:60.0px;top:215.69px;font-size:11px;line-height:11px;font-weight:400;color:#000;letter-spacing:0.15px">12.05.2023</div>
<div class="t" style="left:130.3px;top:215.69px;font-size:11px;line-height:11px;font-weight:400;color:#000;letter-spacing:-0.3px">PP-4/2023</div>
<div class="t" style="left:217.1px;top:215.69px;font-size:11px;line-height:11px;font-weight:400;color:#000;letter-spacing:-0.1px">Platba ZLV-1/2023</div>
<div class="t" style="left:80.2px;width:400px;text-align:right;top:215.69px;font-size:11px;line-height:11px;font-weight:400;color:#000;letter-spacing:-0.2px">2 500,00 CZK</div>
<div class="t" style="left:170.3px;width:400px;text-align:right;top:215.69px;font-size:11px;line-height:11px;font-weight:400;color:#000;letter-spacing:-0.2px">2 500,00 CZK</div>
<div class="t" style="left:582.5px;top:215.69px;font-size:11px;line-height:11px;font-weight:400;color:#000;letter-spacing:-0.2px">21110</div>
<div class="t" style="left:646.3px;top:215.69px;font-size:11px;line-height:11px;font-weight:400;color:#000;letter-spacing:-0.2px">000</div>
<div class="t" style="left:691.0px;top:215.69px;font-size:11px;line-height:11px;font-weight:400;color:#000;letter-spacing:-0.2px">32405</div>
<div class="t" style="left:754.4px;top:215.69px;font-size:11px;line-height:11px;font-weight:400;color:#000;letter-spacing:-0.2px">000</div>
<div class="t" style="left:790.4px;top:215.69px;font-size:11px;line-height:11px;font-weight:400;color:#000;letter-spacing:-0.2px">CK Mare</div>
<div class="t" style="left:892.2px;top:215.69px;font-size:11px;line-height:11px;font-weight:400;color:#000;letter-spacing:-0.2px">ZLV-1/2023</div>
<div class="t" style="left:978.0px;top:215.69px;font-size:11px;line-height:11px;font-weight:400;color:#000;letter-spacing:-0.2px">ZLV-1/2023</div>
<div class="t" style="left:1058.4px;top:215.69px;font-size:11px;line-height:11px;font-weight:400;color:#000;letter-spacing:-0.2px">ZLV-1/2023</div>
<div class="t" style="left:1135.0px;top:215.69px;font-size:11px;line-height:11px;font-weight:400;color:#000;letter-spacing:-0.2px">ZLV-1/2023</div>
<div class="t" style="left:1217.3px;top:215.69px;font-size:11px;line-height:11px;font-weight:400;color:#000;letter-spacing:-0.2px">ZLV-1/2023</div>
<div class="r" style="left:22px;top:234px;width:1264px;height:25px;background:#d9d3ed;"></div>
<div class="r" style="left:5px;top:259px;width:1264px;height:1px;background:#d2d2d2;"></div>
<div class="t" style="left:26.0px;top:241.69px;font-size:11px;line-height:11px;font-weight:400;color:#000;">Ne</div>
<div class="t" style="left:60.0px;top:241.69px;font-size:11px;line-height:11px;font-weight:400;color:#000;letter-spacing:0.15px">20.05.2023</div>
<div class="t" style="left:130.3px;top:241.69px;font-size:11px;line-height:11px;font-weight:400;color:#000;letter-spacing:-0.3px">FV-1/2023</div>
<div class="t" style="left:217.1px;top:241.69px;font-size:11px;line-height:11px;font-weight:400;color:#000;letter-spacing:-0.1px">Zúčtování zálohy ZLV-2/2023</div>
<div class="t" style="left:80.2px;width:400px;text-align:right;top:241.69px;font-size:11px;line-height:11px;font-weight:400;color:#000;letter-spacing:-0.2px">2 000,00 CZK</div>
<div class="t" style="left:170.3px;width:400px;text-align:right;top:241.69px;font-size:11px;line-height:11px;font-weight:400;color:#000;letter-spacing:-0.2px">2 000,00 CZK</div>
<div class="t" style="left:582.5px;top:241.69px;font-size:11px;line-height:11px;font-weight:400;color:#000;letter-spacing:-0.2px">32405</div>
<div class="t" style="left:646.3px;top:241.69px;font-size:11px;line-height:11px;font-weight:400;color:#000;letter-spacing:-0.2px">000</div>
<div class="t" style="left:691.0px;top:241.69px;font-size:11px;line-height:11px;font-weight:400;color:#000;letter-spacing:-0.2px">31100</div>
<div class="t" style="left:754.4px;top:241.69px;font-size:11px;line-height:11px;font-weight:400;color:#000;letter-spacing:-0.2px">000</div>
<div class="t" style="left:790.4px;top:241.69px;font-size:11px;line-height:11px;font-weight:400;color:#000;letter-spacing:-0.2px">CK Mare</div>
<div class="t" style="left:892.2px;top:241.69px;font-size:11px;line-height:11px;font-weight:400;color:#000;letter-spacing:-0.2px">ZLV-1/2023</div>
<div class="t" style="left:978.0px;top:241.69px;font-size:11px;line-height:11px;font-weight:400;color:#000;letter-spacing:-0.2px">ZLV-1/2023</div>
<div class="t" style="left:1058.4px;top:241.69px;font-size:11px;line-height:11px;font-weight:400;color:#000;letter-spacing:-0.2px">ZLV-1/2023</div>
<div class="t" style="left:1135.0px;top:241.69px;font-size:11px;line-height:11px;font-weight:400;color:#000;letter-spacing:-0.2px">ZLV-1/2023</div>
<div class="t" style="left:1217.3px;top:241.69px;font-size:11px;line-height:11px;font-weight:400;color:#000;letter-spacing:-0.2px">ZLV-1/2023</div>
<div class="r" style="left:22px;top:260px;width:1264px;height:25px;background:#d9d3ed;"></div>
<div class="r" style="left:5px;top:285px;width:1264px;height:1px;background:#d2d2d2;"></div>
<div class="t" style="left:26.0px;top:267.69px;font-size:11px;line-height:11px;font-weight:400;color:#000;">Ne</div>
<div class="t" style="left:60.0px;top:267.69px;font-size:11px;line-height:11px;font-weight:400;color:#000;letter-spacing:0.15px">20.05.2023</div>
<div class="t" style="left:130.3px;top:267.69px;font-size:11px;line-height:11px;font-weight:400;color:#000;letter-spacing:-0.3px">FV-1/2023</div>
<div class="t" style="left:217.1px;top:267.69px;font-size:11px;line-height:11px;font-weight:400;color:#000;letter-spacing:-0.1px">Zúčtování zálohy ZLV-1/2023</div>
<div class="t" style="left:80.2px;width:400px;text-align:right;top:267.69px;font-size:11px;line-height:11px;font-weight:400;color:#000;letter-spacing:-0.2px">5 500,00 CZK</div>
<div class="t" style="left:170.3px;width:400px;text-align:right;top:267.69px;font-size:11px;line-height:11px;font-weight:400;color:#000;letter-spacing:-0.2px">5 500,00 CZK</div>
<div class="t" style="left:582.5px;top:267.69px;font-size:11px;line-height:11px;font-weight:400;color:#000;letter-spacing:-0.2px">32405</div>
<div class="t" style="left:646.3px;top:267.69px;font-size:11px;line-height:11px;font-weight:400;color:#000;letter-spacing:-0.2px">000</div>
<div class="t" style="left:691.0px;top:267.69px;font-size:11px;line-height:11px;font-weight:400;color:#000;letter-spacing:-0.2px">31100</div>
<div class="t" style="left:754.4px;top:267.69px;font-size:11px;line-height:11px;font-weight:400;color:#000;letter-spacing:-0.2px">000</div>
<div class="t" style="left:790.4px;top:267.69px;font-size:11px;line-height:11px;font-weight:400;color:#000;letter-spacing:-0.2px">CK Mare</div>
<div class="t" style="left:892.2px;top:267.69px;font-size:11px;line-height:11px;font-weight:400;color:#000;letter-spacing:-0.2px">ZLV-1/2023</div>
<div class="t" style="left:978.0px;top:267.69px;font-size:11px;line-height:11px;font-weight:400;color:#000;letter-spacing:-0.2px">ZLV-1/2023</div>
<div class="t" style="left:1058.4px;top:267.69px;font-size:11px;line-height:11px;font-weight:400;color:#000;letter-spacing:-0.2px">ZLV-1/2023</div>
<div class="t" style="left:1135.0px;top:267.69px;font-size:11px;line-height:11px;font-weight:400;color:#000;letter-spacing:-0.2px">ZLV-1/2023</div>
<div class="t" style="left:1217.3px;top:267.69px;font-size:11px;line-height:11px;font-weight:400;color:#000;letter-spacing:-0.2px">ZLV-1/2023</div>
<div class="r" style="left:22px;top:286px;width:1264px;height:25px;background:#d9d3ed;"></div>
<div class="r" style="left:5px;top:311px;width:1264px;height:1px;background:#d2d2d2;"></div>
<div class="t" style="left:26.0px;top:293.69px;font-size:11px;line-height:11px;font-weight:400;color:#000;">Ne</div>
<div class="t" style="left:60.0px;top:293.69px;font-size:11px;line-height:11px;font-weight:400;color:#000;letter-spacing:0.15px">28.05.2023</div>
<div class="t" style="left:130.3px;top:293.69px;font-size:11px;line-height:11px;font-weight:400;color:#000;letter-spacing:-0.3px">FV-2/2023</div>
<div class="t" style="left:217.1px;top:293.69px;font-size:11px;line-height:11px;font-weight:400;color:#000;letter-spacing:-0.1px">Zúčtování zálohy ZLV-3/2023</div>
<div class="t" style="left:80.2px;width:400px;text-align:right;top:293.69px;font-size:11px;line-height:11px;font-weight:400;color:#000;letter-spacing:-0.2px">3 000,00 CZK</div>
<div class="t" style="left:170.3px;width:400px;text-align:right;top:293.69px;font-size:11px;line-height:11px;font-weight:400;color:#000;letter-spacing:-0.2px">3 000,00 CZK</div>
<div class="t" style="left:582.5px;top:293.69px;font-size:11px;line-height:11px;font-weight:400;color:#000;letter-spacing:-0.2px">32405</div>
<div class="t" style="left:646.3px;top:293.69px;font-size:11px;line-height:11px;font-weight:400;color:#000;letter-spacing:-0.2px">000</div>
<div class="t" style="left:691.0px;top:293.69px;font-size:11px;line-height:11px;font-weight:400;color:#000;letter-spacing:-0.2px">31100</div>
<div class="t" style="left:754.4px;top:293.69px;font-size:11px;line-height:11px;font-weight:400;color:#000;letter-spacing:-0.2px">000</div>
<div class="t" style="left:790.4px;top:293.69px;font-size:11px;line-height:11px;font-weight:400;color:#000;letter-spacing:-0.2px">CK Mare</div>
<div class="t" style="left:892.2px;top:293.69px;font-size:11px;line-height:11px;font-weight:400;color:#000;letter-spacing:-0.2px">ZLV-1/2023</div>
<div class="t" style="left:978.0px;top:293.69px;font-size:11px;line-height:11px;font-weight:400;color:#000;letter-spacing:-0.2px">ZLV-1/2023</div>
<div class="t" style="left:1058.4px;top:293.69px;font-size:11px;line-height:11px;font-weight:400;color:#000;letter-spacing:-0.2px">FV-2/2023</div>
<div class="t" style="left:1135.0px;top:293.69px;font-size:11px;line-height:11px;font-weight:400;color:#000;letter-spacing:-0.2px">ZLV-1/2023</div>
<div class="t" style="left:1217.3px;top:293.69px;font-size:11px;line-height:11px;font-weight:400;color:#000;letter-spacing:-0.2px">FV-2/2023</div>
<div class="r" style="left:5px;top:337px;width:1264px;height:1px;background:#d2d2d2;"></div>
<div class="t" style="left:26.0px;top:319.69px;font-size:11px;line-height:11px;font-weight:400;color:#000;">Ne</div>
<div class="t" style="left:60.0px;top:319.69px;font-size:11px;line-height:11px;font-weight:400;color:#000;letter-spacing:0.15px">20.12.2016</div>
<div class="t" style="left:130.3px;top:319.69px;font-size:11px;line-height:11px;font-weight:400;color:#000;letter-spacing:-0.3px">PP-8/2016</div>
<div class="t" style="left:217.1px;top:319.69px;font-size:11px;line-height:11px;font-weight:400;color:#000;letter-spacing:-0.1px">Platba ZLV2-1/2016</div>
<div class="t" style="left:80.2px;width:400px;text-align:right;top:319.69px;font-size:11px;line-height:11px;font-weight:400;color:#000;letter-spacing:-0.2px">10,00 USD</div>
<div class="t" style="left:170.3px;width:400px;text-align:right;top:319.69px;font-size:11px;line-height:11px;font-weight:400;color:#000;letter-spacing:-0.2px">230,00 CZK</div>
<div class="t" style="left:582.5px;top:319.69px;font-size:11px;line-height:11px;font-weight:400;color:#000;letter-spacing:-0.2px">21130</div>
<div class="t" style="left:646.3px;top:319.69px;font-size:11px;line-height:11px;font-weight:400;color:#000;letter-spacing:-0.2px">000</div>
<div class="t" style="left:691.0px;top:319.69px;font-size:11px;line-height:11px;font-weight:400;color:#000;letter-spacing:-0.2px">32405</div>
<div class="t" style="left:754.4px;top:319.69px;font-size:11px;line-height:11px;font-weight:400;color:#000;letter-spacing:-0.2px">000</div>
<div class="t" style="left:790.4px;top:319.69px;font-size:11px;line-height:11px;font-weight:400;color:#000;letter-spacing:-0.2px">ABC s.r.o.</div>
<div class="t" style="left:892.2px;top:319.69px;font-size:11px;line-height:11px;font-weight:400;color:#000;letter-spacing:-0.2px">ZLV2-1/2016</div>
<div class="t" style="left:978.0px;top:319.69px;font-size:11px;line-height:11px;font-weight:400;color:#000;letter-spacing:-0.2px">ZLV2-1/2016</div>
<div class="t" style="left:1058.4px;top:319.69px;font-size:11px;line-height:11px;font-weight:400;color:#000;letter-spacing:-0.2px">ZLV2-1/2016</div>
<div class="t" style="left:1135.0px;top:319.69px;font-size:11px;line-height:11px;font-weight:400;color:#000;letter-spacing:-0.2px">ZLV2-1/2016</div>
<div class="t" style="left:1217.3px;top:319.69px;font-size:11px;line-height:11px;font-weight:400;color:#000;letter-spacing:-0.2px">ZLV2-1/2016</div>
<div class="r" style="left:5px;top:363px;width:1264px;height:1px;background:#d2d2d2;"></div>
<div class="t" style="left:26.0px;top:345.69px;font-size:11px;line-height:11px;font-weight:400;color:#000;">Ne</div>
<div class="t" style="left:60.0px;top:345.69px;font-size:11px;line-height:11px;font-weight:400;color:#000;letter-spacing:0.15px">31.12.2017</div>
<div class="t" style="left:130.3px;top:345.69px;font-size:11px;line-height:11px;font-weight:400;color:#000;letter-spacing:-0.3px">KZN-99/2017</div>
<div class="t" style="left:217.1px;top:345.69px;font-size:11px;line-height:11px;font-weight:400;color:#000;letter-spacing:-0.1px">Kurzová ztráta ZLV2-1/2016</div>
<div class="t" style="left:80.2px;width:400px;text-align:right;top:345.69px;font-size:11px;line-height:11px;font-weight:400;color:#000;letter-spacing:-0.2px">90,00 CZK</div>
<div class="t" style="left:170.3px;width:400px;text-align:right;top:345.69px;font-size:11px;line-height:11px;font-weight:400;color:#000;letter-spacing:-0.2px">90,00 CZK</div>
<div class="t" style="left:582.5px;top:345.69px;font-size:11px;line-height:11px;font-weight:400;color:#000;letter-spacing:-0.2px">56300</div>
<div class="t" style="left:646.3px;top:345.69px;font-size:11px;line-height:11px;font-weight:400;color:#000;letter-spacing:-0.2px">000</div>
<div class="t" style="left:691.0px;top:345.69px;font-size:11px;line-height:11px;font-weight:400;color:#000;letter-spacing:-0.2px">32405</div>
<div class="t" style="left:754.4px;top:345.69px;font-size:11px;line-height:11px;font-weight:400;color:#000;letter-spacing:-0.2px">000</div>
<div class="t" style="left:790.4px;top:345.69px;font-size:11px;line-height:11px;font-weight:400;color:#000;letter-spacing:-0.2px">ABC s.r.o.</div>
<div class="t" style="left:892.2px;top:345.69px;font-size:11px;line-height:11px;font-weight:400;color:#000;letter-spacing:-0.2px">ZLV2-1/2016</div>
<div class="t" style="left:978.0px;top:345.69px;font-size:11px;line-height:11px;font-weight:400;color:#000;letter-spacing:-0.2px">ZLV2-1/2016</div>
<div class="t" style="left:1058.4px;top:345.69px;font-size:11px;line-height:11px;font-weight:400;color:#000;letter-spacing:-0.2px">ZLV2-1/2016</div>
<div class="t" style="left:1135.0px;top:345.69px;font-size:11px;line-height:11px;font-weight:400;color:#000;letter-spacing:-0.2px">ZLV2-1/2016</div>
<div class="t" style="left:1217.3px;top:345.69px;font-size:11px;line-height:11px;font-weight:400;color:#000;letter-spacing:-0.2px">ZLV2-1/2016</div>
<div class="r" style="left:5px;top:389px;width:1264px;height:1px;background:#d2d2d2;"></div>
<div class="t" style="left:26.0px;top:371.69px;font-size:11px;line-height:11px;font-weight:400;color:#000;">Ne</div>
<div class="t" style="left:60.0px;top:371.69px;font-size:11px;line-height:11px;font-weight:400;color:#000;letter-spacing:0.15px">31.12.2018</div>
<div class="t" style="left:130.3px;top:371.69px;font-size:11px;line-height:11px;font-weight:400;color:#000;letter-spacing:-0.3px">KZN-43/2018</div>
<div class="t" style="left:217.1px;top:371.69px;font-size:11px;line-height:11px;font-weight:400;color:#000;letter-spacing:-0.1px">Kurzová ztráta ZLV2-1/2016</div>
<div class="t" style="left:80.2px;width:400px;text-align:right;top:371.69px;font-size:11px;line-height:11px;font-weight:400;color:#000;letter-spacing:-0.2px">20,00 CZK</div>
<div class="t" style="left:170.3px;width:400px;text-align:right;top:371.69px;font-size:11px;line-height:11px;font-weight:400;color:#000;letter-spacing:-0.2px">20,00 CZK</div>
<div class="t" style="left:582.5px;top:371.69px;font-size:11px;line-height:11px;font-weight:400;color:#000;letter-spacing:-0.2px">56300</div>
<div class="t" style="left:646.3px;top:371.69px;font-size:11px;line-height:11px;font-weight:400;color:#000;letter-spacing:-0.2px">000</div>
<div class="t" style="left:691.0px;top:371.69px;font-size:11px;line-height:11px;font-weight:400;color:#000;letter-spacing:-0.2px">32405</div>
<div class="t" style="left:754.4px;top:371.69px;font-size:11px;line-height:11px;font-weight:400;color:#000;letter-spacing:-0.2px">000</div>
<div class="t" style="left:790.4px;top:371.69px;font-size:11px;line-height:11px;font-weight:400;color:#000;letter-spacing:-0.2px">ABC s.r.o.</div>
<div class="t" style="left:892.2px;top:371.69px;font-size:11px;line-height:11px;font-weight:400;color:#000;letter-spacing:-0.2px">ZLV2-1/2016</div>
<div class="t" style="left:978.0px;top:371.69px;font-size:11px;line-height:11px;font-weight:400;color:#000;letter-spacing:-0.2px">ZLV2-1/2016</div>
<div class="t" style="left:1058.4px;top:371.69px;font-size:11px;line-height:11px;font-weight:400;color:#000;letter-spacing:-0.2px">ZLV2-1/2016</div>
<div class="t" style="left:1135.0px;top:371.69px;font-size:11px;line-height:11px;font-weight:400;color:#000;letter-spacing:-0.2px">ZLV2-1/2016</div>
<div class="t" style="left:1217.3px;top:371.69px;font-size:11px;line-height:11px;font-weight:400;color:#000;letter-spacing:-0.2px">ZLV2-1/2016</div>
<div class="r" style="left:5px;top:415px;width:1264px;height:1px;background:#d2d2d2;"></div>
<div class="t" style="left:26.0px;top:397.69px;font-size:11px;line-height:11px;font-weight:400;color:#000;">Ne</div>
<div class="t" style="left:60.0px;top:397.69px;font-size:11px;line-height:11px;font-weight:400;color:#000;letter-spacing:0.15px">31.12.2019</div>
<div class="t" style="left:130.3px;top:397.69px;font-size:11px;line-height:11px;font-weight:400;color:#000;letter-spacing:-0.3px">KZN-26/2019</div>
<div class="t" style="left:217.1px;top:397.69px;font-size:11px;line-height:11px;font-weight:400;color:#000;letter-spacing:-0.1px">Kurzová ztráta ZLV2-1/2016</div>
<div class="t" style="left:80.2px;width:400px;text-align:right;top:397.69px;font-size:11px;line-height:11px;font-weight:400;color:#000;letter-spacing:-0.2px">10,00 CZK</div>
<div class="t" style="left:170.3px;width:400px;text-align:right;top:397.69px;font-size:11px;line-height:11px;font-weight:400;color:#000;letter-spacing:-0.2px">10,00 CZK</div>
<div class="t" style="left:582.5px;top:397.69px;font-size:11px;line-height:11px;font-weight:400;color:#000;letter-spacing:-0.2px">56300</div>
<div class="t" style="left:646.3px;top:397.69px;font-size:11px;line-height:11px;font-weight:400;color:#000;letter-spacing:-0.2px">000</div>
<div class="t" style="left:691.0px;top:397.69px;font-size:11px;line-height:11px;font-weight:400;color:#000;letter-spacing:-0.2px">32405</div>
<div class="t" style="left:754.4px;top:397.69px;font-size:11px;line-height:11px;font-weight:400;color:#000;letter-spacing:-0.2px">000</div>
<div class="t" style="left:790.4px;top:397.69px;font-size:11px;line-height:11px;font-weight:400;color:#000;letter-spacing:-0.2px">ABC s.r.o.</div>
<div class="t" style="left:892.2px;top:397.69px;font-size:11px;line-height:11px;font-weight:400;color:#000;letter-spacing:-0.2px">ZLV2-1/2016</div>
<div class="t" style="left:978.0px;top:397.69px;font-size:11px;line-height:11px;font-weight:400;color:#000;letter-spacing:-0.2px">ZLV2-1/2016</div>
<div class="t" style="left:1058.4px;top:397.69px;font-size:11px;line-height:11px;font-weight:400;color:#000;letter-spacing:-0.2px">ZLV2-1/2016</div>
<div class="t" style="left:1135.0px;top:397.69px;font-size:11px;line-height:11px;font-weight:400;color:#000;letter-spacing:-0.2px">ZLV2-1/2016</div>
<div class="t" style="left:1217.3px;top:397.69px;font-size:11px;line-height:11px;font-weight:400;color:#000;letter-spacing:-0.2px">ZLV2-1/2016</div>
<div class="r" style="left:22px;top:416px;width:1264px;height:25px;background:#d9d3ed;"></div>
<div class="r" style="left:5px;top:441px;width:1264px;height:1px;background:#d2d2d2;"></div>
<div class="t" style="left:26.0px;top:423.69px;font-size:11px;line-height:11px;font-weight:400;color:#000;">Ne</div>
<div class="t" style="left:60.0px;top:423.69px;font-size:11px;line-height:11px;font-weight:400;color:#000;letter-spacing:0.15px">20.10.2019</div>
<div class="t" style="left:130.3px;top:423.69px;font-size:11px;line-height:11px;font-weight:400;color:#000;letter-spacing:-0.3px">FV-1/2019</div>
<div class="t" style="left:217.1px;top:423.69px;font-size:11px;line-height:11px;font-weight:400;color:#000;letter-spacing:-0.1px">Zúčtování zálohy ZLV2-18/2017</div>
<div class="t" style="left:80.2px;width:400px;text-align:right;top:423.69px;font-size:11px;line-height:11px;font-weight:400;color:#000;letter-spacing:-0.2px">15,00 USD</div>
<div class="t" style="left:170.3px;width:400px;text-align:right;top:423.69px;font-size:11px;line-height:11px;font-weight:400;color:#000;letter-spacing:-0.2px">450,00 CZK</div>
<div class="t" style="left:582.5px;top:423.69px;font-size:11px;line-height:11px;font-weight:400;color:#000;letter-spacing:-0.2px">32405</div>
<div class="t" style="left:646.3px;top:423.69px;font-size:11px;line-height:11px;font-weight:400;color:#000;letter-spacing:-0.2px">000</div>
<div class="t" style="left:691.0px;top:423.69px;font-size:11px;line-height:11px;font-weight:400;color:#000;letter-spacing:-0.2px">31100</div>
<div class="t" style="left:754.4px;top:423.69px;font-size:11px;line-height:11px;font-weight:400;color:#000;letter-spacing:-0.2px">000</div>
<div class="t" style="left:790.4px;top:423.69px;font-size:11px;line-height:11px;font-weight:400;color:#000;letter-spacing:-0.2px">Kofr Karel - elektro</div>
<div class="t" style="left:892.2px;top:423.69px;font-size:11px;line-height:11px;font-weight:400;color:#000;letter-spacing:-0.2px">ZLV2-17/2017</div>
<div class="t" style="left:978.0px;top:423.69px;font-size:11px;line-height:11px;font-weight:400;color:#000;letter-spacing:-0.2px">ZLV2-17/2017</div>
<div class="t" style="left:1058.4px;top:423.69px;font-size:11px;line-height:11px;font-weight:400;color:#000;letter-spacing:-0.2px">ZLV2-17/2017</div>
<div class="t" style="left:1135.0px;top:423.69px;font-size:11px;line-height:11px;font-weight:400;color:#000;letter-spacing:-0.2px">ZLV2-17/2017</div>
<div class="t" style="left:1217.3px;top:423.69px;font-size:11px;line-height:11px;font-weight:400;color:#000;letter-spacing:-0.2px">ZLV2-17/2017</div>
<div class="r" style="left:22px;top:442px;width:1264px;height:25px;background:#d9d3ed;"></div>
<div class="r" style="left:5px;top:467px;width:1264px;height:1px;background:#d2d2d2;"></div>
<div class="t" style="left:26.0px;top:449.69px;font-size:11px;line-height:11px;font-weight:400;color:#000;">Ne</div>
<div class="t" style="left:60.0px;top:449.69px;font-size:11px;line-height:11px;font-weight:400;color:#000;letter-spacing:0.15px">20.10.2019</div>
<div class="t" style="left:130.3px;top:449.69px;font-size:11px;line-height:11px;font-weight:400;color:#000;letter-spacing:-0.3px">FV-1/2019</div>
<div class="t" style="left:217.1px;top:449.69px;font-size:11px;line-height:11px;font-weight:400;color:#000;letter-spacing:-0.1px">Zúčtování zálohy ZLV2-19/2017</div>
<div class="t" style="left:80.2px;width:400px;text-align:right;top:449.69px;font-size:11px;line-height:11px;font-weight:400;color:#000;letter-spacing:-0.2px">15,00 USD</div>
<div class="t" style="left:170.3px;width:400px;text-align:right;top:449.69px;font-size:11px;line-height:11px;font-weight:400;color:#000;letter-spacing:-0.2px">450,00 CZK</div>
<div class="t" style="left:582.5px;top:449.69px;font-size:11px;line-height:11px;font-weight:400;color:#000;letter-spacing:-0.2px">32405</div>
<div class="t" style="left:646.3px;top:449.69px;font-size:11px;line-height:11px;font-weight:400;color:#000;letter-spacing:-0.2px">000</div>
<div class="t" style="left:691.0px;top:449.69px;font-size:11px;line-height:11px;font-weight:400;color:#000;letter-spacing:-0.2px">31100</div>
<div class="t" style="left:754.4px;top:449.69px;font-size:11px;line-height:11px;font-weight:400;color:#000;letter-spacing:-0.2px">000</div>
<div class="t" style="left:790.4px;top:449.69px;font-size:11px;line-height:11px;font-weight:400;color:#000;letter-spacing:-0.2px">Kofr Karel - elektro</div>
<div class="t" style="left:892.2px;top:449.69px;font-size:11px;line-height:11px;font-weight:400;color:#000;letter-spacing:-0.2px">ZLV2-17/2017</div>
<div class="t" style="left:978.0px;top:449.69px;font-size:11px;line-height:11px;font-weight:400;color:#000;letter-spacing:-0.2px">ZLV2-17/2017</div>
<div class="t" style="left:1058.4px;top:449.69px;font-size:11px;line-height:11px;font-weight:400;color:#000;letter-spacing:-0.2px">ZLV2-17/2017</div>
<div class="t" style="left:1135.0px;top:449.69px;font-size:11px;line-height:11px;font-weight:400;color:#000;letter-spacing:-0.2px">ZLV2-17/2017</div>
<div class="t" style="left:1217.3px;top:449.69px;font-size:11px;line-height:11px;font-weight:400;color:#000;letter-spacing:-0.2px">ZLV2-17/2017</div>
<div class="r" style="left:22px;top:468px;width:1264px;height:25px;background:#d9d3ed;"></div>
<div class="r" style="left:5px;top:493px;width:1264px;height:1px;background:#d2d2d2;"></div>
<div class="t" style="left:26.0px;top:475.69px;font-size:11px;line-height:11px;font-weight:400;color:#000;">Ne</div>
<div class="t" style="left:60.0px;top:475.69px;font-size:11px;line-height:11px;font-weight:400;color:#000;letter-spacing:0.15px">20.10.2019</div>
<div class="t" style="left:130.3px;top:475.69px;font-size:11px;line-height:11px;font-weight:400;color:#000;letter-spacing:-0.3px">FV-1/2019</div>
<div class="t" style="left:217.1px;top:475.69px;font-size:11px;line-height:11px;font-weight:400;color:#000;letter-spacing:-0.1px">Zúčtování zálohy ZLV2-22/2017</div>
<div class="t" style="left:80.2px;width:400px;text-align:right;top:475.69px;font-size:11px;line-height:11px;font-weight:400;color:#000;letter-spacing:-0.2px">5,00 USD</div>
<div class="t" style="left:170.3px;width:400px;text-align:right;top:475.69px;font-size:11px;line-height:11px;font-weight:400;color:#000;letter-spacing:-0.2px">150,00 CZK</div>
<div class="t" style="left:582.5px;top:475.69px;font-size:11px;line-height:11px;font-weight:400;color:#000;letter-spacing:-0.2px">32405</div>
<div class="t" style="left:646.3px;top:475.69px;font-size:11px;line-height:11px;font-weight:400;color:#000;letter-spacing:-0.2px">000</div>
<div class="t" style="left:691.0px;top:475.69px;font-size:11px;line-height:11px;font-weight:400;color:#000;letter-spacing:-0.2px">31100</div>
<div class="t" style="left:754.4px;top:475.69px;font-size:11px;line-height:11px;font-weight:400;color:#000;letter-spacing:-0.2px">000</div>
<div class="t" style="left:790.4px;top:475.69px;font-size:11px;line-height:11px;font-weight:400;color:#000;letter-spacing:-0.2px">Kofr Karel - elektro</div>
<div class="t" style="left:892.2px;top:475.69px;font-size:11px;line-height:11px;font-weight:400;color:#000;letter-spacing:-0.2px">ZLV2-17/2017</div>
<div class="t" style="left:978.0px;top:475.69px;font-size:11px;line-height:11px;font-weight:400;color:#000;letter-spacing:-0.2px">ZLV2-17/2017</div>
<div class="t" style="left:1058.4px;top:475.69px;font-size:11px;line-height:11px;font-weight:400;color:#000;letter-spacing:-0.2px">ZLV2-17/2017</div>
<div class="t" style="left:1135.0px;top:475.69px;font-size:11px;line-height:11px;font-weight:400;color:#000;letter-spacing:-0.2px">ZLV2-17/2017</div>
<div class="t" style="left:1217.3px;top:475.69px;font-size:11px;line-height:11px;font-weight:400;color:#000;letter-spacing:-0.2px">ZLV2-17/2017</div>
</div>
<div class="r" style="left:1460px;top:401px;width:17px;height:549px;background:#f0f0f0;"></div>
<div class="r" style="left:1460px;top:401px;width:17px;height:17px;background:#e6e6e6;"></div>
<svg class="r" style="left:1462px;top:405px" width="13" height="9"><polygon points="1,7 6,1.8 11,7" fill="#606060"/></svg>
<div class="r" style="left:1462px;top:418px;width:13px;height:251px;background:#d0d0d0;border-radius:0 0 2px 2px"></div>
<div class="r" style="left:1460px;top:933px;width:17px;height:17px;background:#e6e6e6;"></div>
<svg class="r" style="left:1462px;top:937px" width="13" height="9"><polygon points="1,2 11,2 6,7.4" fill="#606060"/></svg>
<div class="r" style="left:191px;top:950px;width:1269px;height:17px;background:#f0f0f0;"></div>
<div class="r" style="left:191px;top:950px;width:17px;height:17px;background:#e6e6e6;"></div>
<svg class="r" style="left:195px;top:952px" width="9" height="13"><polygon points="2,6.5 7.5,1.5 7.5,11.5" fill="#606060"/></svg>
<div class="r" style="left:208px;top:952px;width:17px;height:13px;background:#d0d0d0;border-radius:2px"></div>
<div class="r" style="left:1443px;top:950px;width:17px;height:17px;background:#e6e6e6;"></div>
<svg class="r" style="left:1446px;top:952px" width="9" height="13"><polygon points="2,1.5 7.6,6.5 2,11.5" fill="#606060"/></svg>
<div class="r" style="left:1460px;top:950px;width:17px;height:17px;background:#e6e6e6;"></div>
<div class="r" style="left:1497px;top:101px;width:118px;height:23px;background:#d1e1f4;border-radius:3px"></div>
<div class="t" style="left:1506.2px;top:107.99px;font-size:11px;line-height:11px;font-weight:400;color:#111;letter-spacing:-0.15px">Tisk, export</div>
<svg class="r" style="left:1602px;top:110px" width="9" height="6"><polygon points="0.5,0.5 8.5,0.5 4.5,4.8" fill="#111"/></svg>
<div class="r" style="left:1497px;top:134px;width:118px;height:23px;background:#d1e1f4;border-radius:3px"></div>
<div class="t" style="left:1506.2px;top:140.99px;font-size:11px;line-height:11px;font-weight:400;color:#111;letter-spacing:-0.15px">Opravit</div>
<svg class="r" style="left:1602px;top:143px" width="9" height="6"><polygon points="0.5,0.5 8.5,0.5 4.5,4.8" fill="#111"/></svg>
<div class="r" style="left:1497px;top:177px;width:118px;height:23px;background:#d1e1f4;border-radius:3px"></div>
<div class="t" style="left:1506.2px;top:183.99px;font-size:11px;line-height:11px;font-weight:400;color:#111;letter-spacing:-0.15px">Občerstvit</div>
<div class="r" style="left:1497px;top:210px;width:118px;height:23px;background:#e6e6e6;border-radius:3px"></div>
<div class="t" style="left:1506.2px;top:216.99px;font-size:11px;line-height:11px;font-weight:400;color:#9a9a9a;letter-spacing:-0.15px">Přesun</div>
<div class="r" style="left:1497px;top:243px;width:118px;height:23px;background:#d1e1f4;border-radius:3px"></div>
<div class="t" style="left:1506.2px;top:249.99px;font-size:11px;line-height:11px;font-weight:400;color:#111;letter-spacing:-0.15px">Osamostatnit</div>
<div class="r" style="left:1497px;top:276px;width:118px;height:23px;background:#d1e1f4;border-radius:3px"></div>
<div class="t" style="left:1506.2px;top:282.99px;font-size:11px;line-height:11px;font-weight:400;color:#111;letter-spacing:-0.15px">Do žádostí</div>
<div class="r" style="left:1497px;top:309px;width:118px;height:23px;background:#d1e1f4;border-radius:3px"></div>
<div class="t" style="left:1506.2px;top:315.99px;font-size:11px;line-height:11px;font-weight:400;color:#111;letter-spacing:-0.15px">Vrátit skupinu</div>
<div class="r" style="left:1497px;top:342px;width:118px;height:23px;background:#d1e1f4;border-radius:3px"></div>
<div class="t" style="left:1506.2px;top:348.99px;font-size:11px;line-height:11px;font-weight:400;color:#111;letter-spacing:-0.15px">Skupina</div>
<svg class="r" style="left:1602px;top:351px" width="9" height="6"><polygon points="0.5,0.5 8.5,0.5 4.5,4.8" fill="#111"/></svg>
<div class="r" style="left:1496px;top:375px;width:117px;height:21px;background:#d1e1f4;border:1px solid #1a6dcc;border-radius:2px"></div>
<div class="t" style="left:1506.2px;top:381.99px;font-size:11px;line-height:11px;font-weight:400;color:#111;letter-spacing:-0.15px">Auditace</div>
<div class="r" style="left:1497px;top:408px;width:118px;height:23px;background:#d1e1f4;border-radius:3px"></div>
<div class="t" style="left:1506.2px;top:414.99px;font-size:11px;line-height:11px;font-weight:400;color:#111;letter-spacing:-0.15px">Odauditace</div>
<div class="r" style="left:1497px;top:441px;width:118px;height:23px;background:#d1e1f4;border-radius:3px"></div>
<div class="t" style="left:1506.2px;top:447.99px;font-size:11px;line-height:11px;font-weight:400;color:#111;letter-spacing:-0.15px">Zdr.doklad</div>
<svg class="r" style="left:1602px;top:450px" width="9" height="6"><polygon points="0.5,0.5 8.5,0.5 4.5,4.8" fill="#111"/></svg>
<div class="r" style="left:1497px;top:484px;width:118px;height:23px;background:#d1e1f4;border-radius:3px"></div>
<div class="t" style="left:1506.2px;top:490.99px;font-size:11px;line-height:11px;font-weight:400;color:#111;letter-spacing:-0.15px">Najít</div>
<div class="r" style="left:1497px;top:517px;width:118px;height:23px;background:#e6e6e6;border-radius:3px"></div>
<div class="t" style="left:1506.2px;top:523.99px;font-size:11px;line-height:11px;font-weight:400;color:#9a9a9a;letter-spacing:-0.15px">Najít další</div>
<div class="r" style="left:1497px;top:550px;width:118px;height:23px;background:#d1e1f4;border-radius:3px"></div>
<div class="t" style="left:1506.2px;top:556.99px;font-size:11px;line-height:11px;font-weight:400;color:#111;letter-spacing:-0.15px">Najít doklad</div>
<div class="r" style="left:1497px;top:583px;width:118px;height:23px;background:#e6e6e6;border-radius:3px"></div>
<div class="t" style="left:1506.2px;top:589.99px;font-size:11px;line-height:11px;font-weight:400;color:#9a9a9a;letter-spacing:-0.15px">Vyrovnat</div>
<svg class="r" style="left:1602px;top:592px" width="9" height="6"><polygon points="0.5,0.5 8.5,0.5 4.5,4.8" fill="#999"/></svg>
<div class="t" style="left:10.0px;top:981.71px;font-size:10.5px;line-height:10.5px;font-weight:400;color:#333;letter-spacing:0px;-webkit-text-stroke:0.1px #333">Jaroslav Novák</div>
<div class="t" style="left:259.0px;top:981.71px;font-size:10.5px;line-height:10.5px;font-weight:400;color:#333;letter-spacing:0px;-webkit-text-stroke:0.1px #333">Spojení: DEMODATA_JAVA_develop</div>
<div class="t" style="left:509.0px;top:981.71px;font-size:10.5px;line-height:10.5px;font-weight:400;color:#333;letter-spacing:0.25px;-webkit-text-stroke:0.1px #333">Verze: 23.2.0</div>
<div class="t" style="left:659.0px;top:981.71px;font-size:10.5px;line-height:10.5px;font-weight:400;color:#333;letter-spacing:0.25px;-webkit-text-stroke:0.1px #333">02.06.2023 (Jarmil)</div>
<div class="t" style="left:809.0px;top:981.71px;font-size:10.5px;line-height:10.5px;font-weight:400;color:#333;letter-spacing:0.25px;-webkit-text-stroke:0.1px #333">Hotline: +420 296 397 330</div>
<div class="t" style="left:472.2px;top:151.13px;font-size:23px;line-height:23px;font-weight:400;color:#ff0000;transform:scaleX(0.931);transform-origin:0 0;-webkit-text-stroke:1.2px #f00">Horní seznam (1) je nyní seřazen za sloupec "Datum" vzestupně</div>
<div class="t" style="left:385.8px;top:377.73px;font-size:23px;line-height:23px;font-weight:400;color:#ff0000;transform:scaleX(0.931);transform-origin:0 0;-webkit-text-stroke:1.2px #f00">Vidíme, že NIJAK neovlivnilo seřazení za "Datum" u záznamů v jednotlivých skupinách ve spodním seznamu (2)</div>
<svg class="r" style="left:0;top:0" width="1630" height="1002" fill="none" stroke="#ff0000" stroke-width="3">
<path d="M464.5 166.5L395.5 234"/>
<path d="M312.2 270V358M301.5 343L312 358.5L320.5 343" stroke-width="3.3" stroke-linejoin="round"/>
<path d="M415.6 400.4L313.4 503.4" stroke-width="3.4"/>
<path d="M419.2 402L312.2 661.9" stroke-width="3.4"/>
</svg>
</body></html>
